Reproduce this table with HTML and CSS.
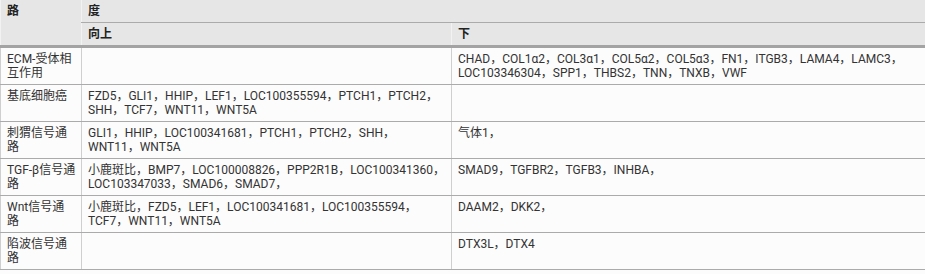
FILE: index.html
```html
<!DOCTYPE html>
<html lang="zh">
<head>
<meta charset="utf-8">
<link rel="stylesheet" href="styles.css">
</head>
<body>
<table class="grid">
  <colgroup>
    <col class="c-path">
    <col class="c-up">
    <col class="c-down">
  </colgroup>
  <thead>
    <tr>
      <th class="h-path" rowspan="2">路</th>
      <th class="h-group" colspan="2">度</th>
    </tr>
    <tr class="h-sub">
      <th>向上</th>
      <th>下</th>
    </tr>
  </thead>
  <tbody>
    <tr>
      <td>ECM-受体相互作用</td>
      <td></td>
      <td>CHAD，COL1α2，COL3α1，COL5α2，COL5α3，FN1，ITGB3，LAMA4，LAMC3，LOC103346304，SPP1，THBS2，TNN，TNXB，VWF</td>
    </tr>
    <tr>
      <td>基底细胞癌</td>
      <td>FZD5，GLI1，HHIP，LEF1，LOC100355594，PTCH1，PTCH2，SHH，TCF7，WNT11，WNT5A</td>
      <td></td>
    </tr>
    <tr>
      <td>刺猬信号通路</td>
      <td>GLI1，HHIP，LOC100341681，PTCH1，PTCH2，SHH，WNT11，WNT5A</td>
      <td>气体1，</td>
    </tr>
    <tr>
      <td>TGF-β信号通路</td>
      <td>小鹿斑比，BMP7，LOC100008826，PPP2R1B，LOC100341360，LOC103347033，SMAD6，SMAD7，</td>
      <td>SMAD9，TGFBR2，TGFB3，INHBA，</td>
    </tr>
    <tr>
      <td>Wnt信号通路</td>
      <td>小鹿斑比，FZD5，LEF1，LOC100341681，LOC100355594，TCF7，WNT11，WNT5A</td>
      <td>DAAM2，DKK2，</td>
    </tr>
    <tr>
      <td>陷波信号通路</td>
      <td></td>
      <td>DTX3L，DTX4</td>
    </tr>
  </tbody>
</table>
</body>
</html>
```

FILE: styles.css
```css
html, body {
  margin: 0;
  padding: 0;
  background: #fcfcfc;
  overflow: hidden;
}

.grid {
  border-collapse: collapse;
  table-layout: fixed;
  width: 925px;
  font-family: Roboto, "Noto Sans CJK SC", sans-serif;
  font-size: 12px;
  line-height: 14px;
  color: #333;
}

.c-path { width: 81px; }
.c-up { width: 370px; }
.c-down { width: 474px; }

.grid th,
.grid td {
  padding: 4px 5px 4px 6px;
  text-align: left;
  vertical-align: top;
  border-left: 1px solid #cfcfcf;
  border-bottom: 1px solid #ababab;
}

.grid thead th {
  background: #e6e6e6;
  font-weight: 700;
  color: #222;
  border-left-color: #f2f2f2;
}

.grid thead tr:first-child th.h-path,
.grid .h-sub th {
  border-bottom: 3px solid #a3a3a3;
}

.grid tbody td {
  background: #fcfcfc;
}
```
